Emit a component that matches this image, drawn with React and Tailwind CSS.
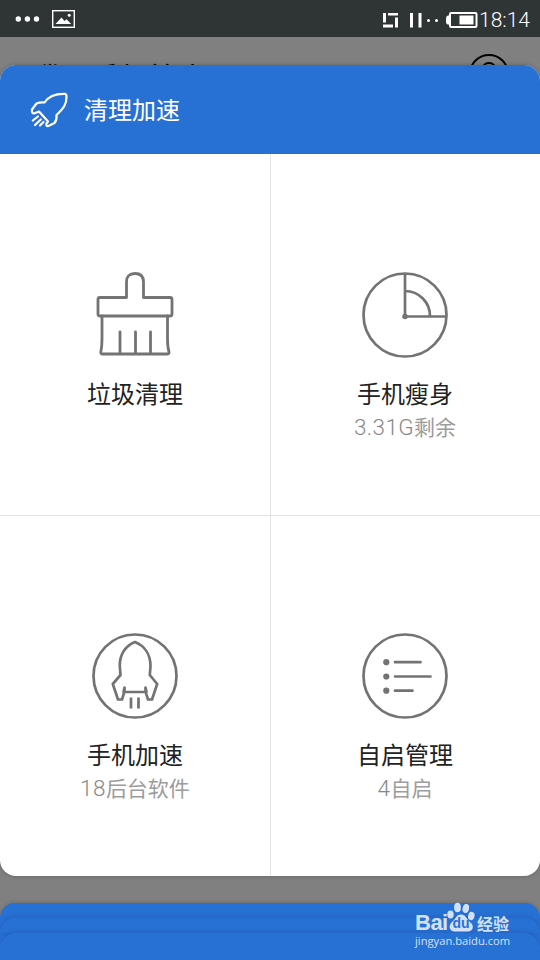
const LATIN_CJK = "font-['Roboto','Noto_Sans_CJK_SC',sans-serif]";

function StatusBar() {
  return (
    <div className="relative z-10 flex h-[37px] shrink-0 items-center bg-[#2f3434] pt-px text-white">
      <svg className="ml-[14px] h-[8px] w-[27px]" viewBox="0 0 27 8" fill="currentColor">
        <circle cx="4.3" cy="4" r="2.7" />
        <circle cx="13.4" cy="4" r="2.7" />
        <circle cx="22.5" cy="4" r="2.7" />
      </svg>
      <svg className="ml-[11px] h-[18px] w-[23px]" viewBox="0 0 23 18">
        <rect x="0.7" y="0.7" width="21.6" height="16.6" fill="none" stroke="currentColor" strokeWidth="1.4" />
        <path d="M3.5 14 L9.5 7.5 L12.5 11 L14.5 9.2 L19.2 14Z" fill="currentColor" />
        <circle cx="17.2" cy="5.2" r="1.5" fill="currentColor" />
      </svg>
      <svg className="mt-[2px] mr-px ml-auto h-[17px] w-[96px]" viewBox="0 0 96 17" fill="currentColor">
        <path d="M1 1H4V10.500H1ZM6 1H16V3.500H6ZM13 5.500H16V15.500H13ZM1 12.500H11V15.500H1ZM28 1H31V15.500H28ZM36.500 1H39.500V15.500H36.500Z" />
        <circle cx="46.500" cy="8.500" r="1.500" />
        <circle cx="54.500" cy="8.500" r="1.500" />
        <rect x="68" y="1" width="26.500" height="14" rx="1" fill="none" stroke="currentColor" strokeWidth="2" />
        <rect x="77.500" y="3.500" width="14" height="9" />
        <path d="M68 3.500H66Q64 4 64 6.500V9.500Q64 12.500 66 12.500H68Z" />
      </svg>
      <span className="mt-[2px] mr-[10px] w-[51px] whitespace-nowrap text-right font-['Roboto',sans-serif] text-[21px] leading-none font-light">18:14</span>
    </div>
  );
}

function HeaderRocket() {
  return (
    <svg className="h-[36px] w-[38px]" viewBox="0 0 38 36" fill="none" stroke="currentColor" strokeWidth="2.200" strokeLinecap="round" strokeLinejoin="round">
      <path d="M14.500 10.500C18 5 25 1.500 35 1.800Q36.500 2 36.500 5C36.500 12 34 16 26.500 23Q27 28 24.500 31L18.500 34Q15.500 34.500 16.500 31.500L18 29.500L9 19.500L4 21.500Q1.500 21.500 2 17.500L6.500 11.500Q10 10 14.500 10.500Z" />
      <path d="M8 24.500L2.800 28.500M10.800 27.500L5 33M13.500 30L10 33.500" />
    </svg>
  );
}

const iconClass = "h-[86px] w-[86px] text-[#737373]";

function Brush() {
  return (
    <svg className={iconClass} viewBox="0 0 86 86" fill="none" stroke="currentColor" strokeWidth="2.800" strokeLinejoin="round" strokeLinecap="round">
      <path d="M34.500 25.500V10Q34.500 1.500 43 1.500T51.500 10V25.500H78Q80 25.500 80 27.500V42Q80 44 78 44H8Q6 44 6 42V27.500Q6 25.500 8 25.500Z" />
      <path d="M10 44V67Q10 75 8.800 80Q8.600 82 10.500 82H75.500Q77.400 82 77 80Q75.500 75 75.500 67V44M28 60V81M43.500 60V81M58.500 60V81" />
    </svg>
  );
}

function Pie() {
  return (
    <svg className={iconClass} viewBox="0 0 86 86" fill="none" stroke="currentColor" strokeWidth="2.700">
      <circle cx="43" cy="43" r="41.500" />
      <path d="M43 2V44.500H84M43 19A25 25 0 0 1 68 44.500" />
      <circle cx="43" cy="44.500" r="2.800" fill="currentColor" stroke="none" />
    </svg>
  );
}

function Rocket() {
  return (
    <svg className={iconClass} viewBox="0 0 86 86" fill="none" stroke="currentColor" strokeWidth="2.700" strokeLinejoin="round">
      <circle cx="43" cy="43" r="41.500" />
      <path d="M43 9C33 13 27.500 22 27.800 33L28.500 42L20.800 51L26 66.500H30L32.500 58.500V54.500L31.500 59H54.500L53.500 54.500V58.500L56 66.500H60L65.200 51L57.800 42L58.500 33C58.500 22 53 13 43 9Z" />
      <path d="M39 64.500V75.500M46.500 64.500V75.500" />
    </svg>
  );
}

function ListIcon() {
  return (
    <svg className={iconClass} viewBox="0 0 86 86" fill="none" stroke="currentColor" strokeWidth="2.700" strokeLinecap="round">
      <circle cx="43" cy="43" r="41.500" />
      <path d="M33 29.200H58.500M33 43.500H68.500M33 57.700H50.500" />
      <g fill="currentColor" stroke="none">
        <circle cx="24.300" cy="29.200" r="3.100" />
        <circle cx="24.300" cy="43.500" r="3.100" />
        <circle cx="24.300" cy="57.700" r="3.100" />
      </g>
    </svg>
  );
}

const tiles = [
  { title: "垃圾清理", icon: Brush, frame: "border-r border-b pt-[118px]" },
  { title: "手机瘦身", count: "3.31G", label: "剩余", icon: Pie, frame: "border-b pt-[118px] pr-px" },
  { title: "手机加速", count: "18", label: "后台软件", icon: Rocket, frame: "border-r pt-[117px]" },
  { title: "自启管理", count: "4", label: "自启", icon: ListIcon, frame: "pt-[117px] pr-px" },
];

function Tile({ title, count, label, icon: Icon, frame }) {
  return (
    <div className={`flex flex-col items-center border-[#e3e3e3] ${frame}`}>
      <Icon />
      <div className="mt-[21px] text-[24px] leading-[32px] text-[#222]">{title}</div>
      {label && (
        <div className="flex items-baseline text-[21px] leading-[32px] text-[#9c9c9c]">
          <span className="text-[22.5px] font-light tracking-[0.4px] text-[#888]">{count}</span>
          <span>{label}</span>
        </div>
      )}
    </div>
  );
}

function Watermark() {
  return (
    <div className="absolute top-[902px] left-[415px] flex w-[98px] flex-col font-['Open_Sans','Noto_Sans_CJK_SC',sans-serif] text-[#d3e1f7]">
      <div className="flex h-[31px] items-end">
        <span className="w-[32px] font-['Liberation_Sans',sans-serif] text-[22px] font-bold leading-[20px] tracking-[-0.5px]">Bai</span>
        <div className="relative h-[31px] w-[28px]">
          <svg className="h-[31px] w-[28px]" viewBox="0 0 28 31" fill="currentColor">
            <ellipse cx="3.500" cy="12.500" rx="3.200" ry="4" />
            <ellipse cx="10.500" cy="5.500" rx="3.400" ry="4.700" />
            <ellipse cx="18.800" cy="6.500" rx="3.200" ry="4.500" transform="rotate(12 18.800 6.500)" />
            <ellipse cx="24.300" cy="14" rx="3.200" ry="4.200" transform="rotate(15 24.300 14)" />
            <path d="M14 12.500C9 12.500 9 17 5 20C0 25 4 30 8 29.500H20C26 30 28 24 23 20C19 17 19 12.500 14 12.500Z" />
          </svg>
          <span className="absolute inset-x-0 bottom-[3px] text-center font-['Liberation_Sans',sans-serif] text-[14px] font-bold leading-[13px] text-[#2871d4]">du</span>
        </div>
        <span className="ml-[2px] whitespace-nowrap text-[16px] font-bold leading-[18px]">经验</span>
      </div>
      <div className="mt-[2px] whitespace-nowrap text-[11.2px] font-medium leading-[12px]">jingyan.baidu.com</div>
    </div>
  );
}

export default function App() {
  return (
    <div className={`relative flex h-[960px] w-[540px] flex-col overflow-hidden bg-[#808080] ${LATIN_CJK}`}>
      <StatusBar />
      <div className="flex h-[28px] shrink-0 items-start justify-between overflow-hidden pr-[31px] pl-[31px] text-black">
        <span className="mt-[21px] text-[29.5px] leading-[42px]">腾讯手机管家</span>
        <svg className="mt-[17px] h-[40px] w-[40px] shrink-0" viewBox="0 0 40 40" fill="none" stroke="currentColor" strokeWidth="2">
          <circle cx="20" cy="20" r="19" />
          <path d="M13.500 15.500a6.500 6.500 0 1 1 9 6L20 25v3" />
        </svg>
      </div>
      <main className="flex h-[811px] shrink-0 flex-col overflow-hidden rounded-[16px] bg-white shadow-[0_0_4px_rgba(0,0,0,0.25)]">
        <header className="flex h-[89px] shrink-0 items-center bg-[#2871d4] pl-[30px] text-white">
          <HeaderRocket />
          <h1 className="mt-[3px] ml-[16px] text-[24px] leading-[32px]">清理加速</h1>
        </header>
        <div className="grid grow grid-cols-[271px_269px] grid-rows-[362px_360px]">
          {tiles.map((t) => (
            <Tile key={t.title} {...t} />
          ))}
        </div>
      </main>
      <div className="mt-[27px] flex h-[57px] shrink-0 flex-col">
        <div className="h-[15px] shrink-0 rounded-t-[15px] bg-[#2871d4] shadow-[0_0_4px_rgba(0,0,0,0.2)]" />
        <div className="flex grow flex-col bg-[#2871d4]">
          <div className="h-[15px] shrink-0 rounded-t-[16px] bg-[#2871d4] shadow-[0_-1px_5px_rgba(0,30,90,0.18)]" />
          <div className="grow rounded-t-[16px] bg-[#2871d4] shadow-[0_-1px_5px_rgba(0,30,90,0.18)]" />
        </div>
      </div>
      <Watermark />
    </div>
  );
}
